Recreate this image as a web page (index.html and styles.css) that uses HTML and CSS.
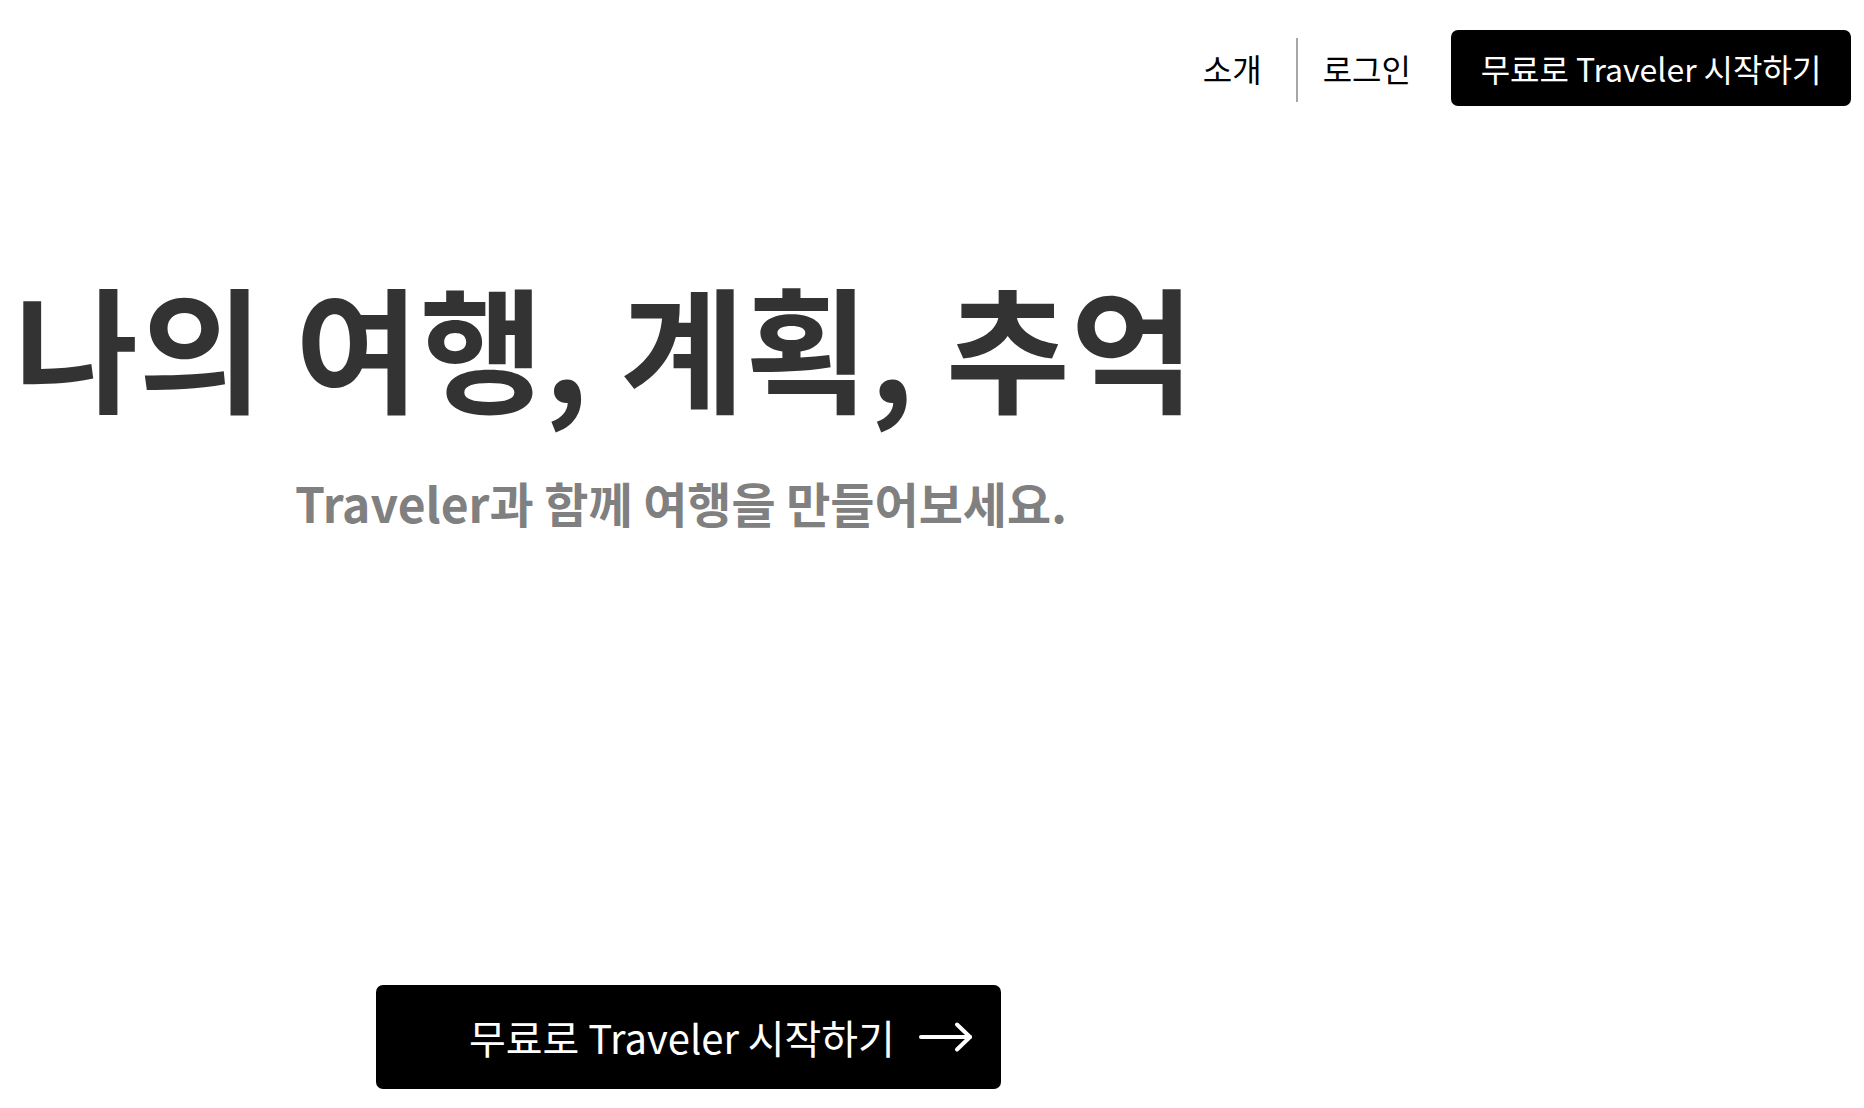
FILE: index.html
```html
<!DOCTYPE html>
<html lang="ko">
<head>
<meta charset="utf-8">
<title>Traveler</title>
<link rel="stylesheet" href="styles.css">
</head>
<body>
<header class="topbar">
  <nav class="nav">
    <a class="nav-link" href="#">소개</a>
    <span class="nav-sep"></span>
    <a class="nav-link" href="#">로그인</a>
    <a class="nav-cta" href="#">무료로 Traveler 시작하기</a>
  </nav>
</header>
<main class="hero">
  <h1 class="hero-title">나의 여행, 계획, 추억</h1>
  <p class="hero-sub">Traveler과 함께 여행을 만들어보세요.</p>
  <a class="hero-cta" href="#">
    <span class="hero-cta-text">무료로 Traveler 시작하기</span>
    <svg class="hero-cta-arrow" width="54" height="32" viewBox="0 0 54 32" fill="none" stroke="#fff" stroke-width="4" stroke-linecap="round" stroke-linejoin="round">
      <path d="M2 16 H51"/>
      <path d="M38 3.5 L51 16 L38 28.5"/>
    </svg>
  </a>
</main>
</body>
</html>
```

FILE: styles.css
```css
* { box-sizing: border-box; }
html, body {
  margin: 0;
  padding: 0;
  background: #fff;
}
body {
  font-family: "Noto Sans CJK KR", "Noto Sans", sans-serif;
  color: #000;
  width: 1864px;
  height: 1108px;
  overflow: hidden;
}
a { text-decoration: none; color: inherit; }

.topbar {
  display: flex;
  justify-content: flex-end;
  padding: 30px 13px 0 0;
}
.nav {
  display: flex;
  align-items: center;
}
.nav-link {
  font-size: 32px;
  line-height: 1;
  color: #000;
}
.nav-sep {
  width: 2px;
  height: 64px;
  background: #a6a6a6;
  margin: 4px 25px 0 34px;
}
.nav-link + .nav-cta { margin-left: 40px; }
.nav-cta {
  display: flex;
  align-items: center;
  justify-content: center;
  width: 400px;
  height: 76px;
  background: #000;
  color: #fff;
  border-radius: 7px;
  font-size: 32px;
  line-height: 1;
  word-spacing: -0.06em;
}

.hero {
  display: flex;
  flex-direction: column;
  align-items: flex-start;
}
.hero-title {
  margin: 171px 0 0 14px;
  font-size: 135px;
  line-height: 1;
  font-weight: 700;
  letter-spacing: 0.5px;
  word-spacing: -0.05em;
  color: #333;
  white-space: nowrap;
}
.hero-sub {
  margin: 66px 0 0 295px;
  font-size: 48px;
  line-height: 1;
  font-weight: 700;
  word-spacing: -0.06em;
  color: #808080;
  white-space: nowrap;
}
.hero-cta {
  margin: 459px 0 0 376px;
  width: 625px;
  height: 104px;
  background: #000;
  color: #fff;
  border-radius: 7px;
  display: flex;
  align-items: center;
  padding-left: 93px;
  gap: 24px;
}
.hero-cta-text {
  font-size: 40px;
  line-height: 1;
  word-spacing: -0.06em;
}
.hero-cta-arrow { display: block; }
```
